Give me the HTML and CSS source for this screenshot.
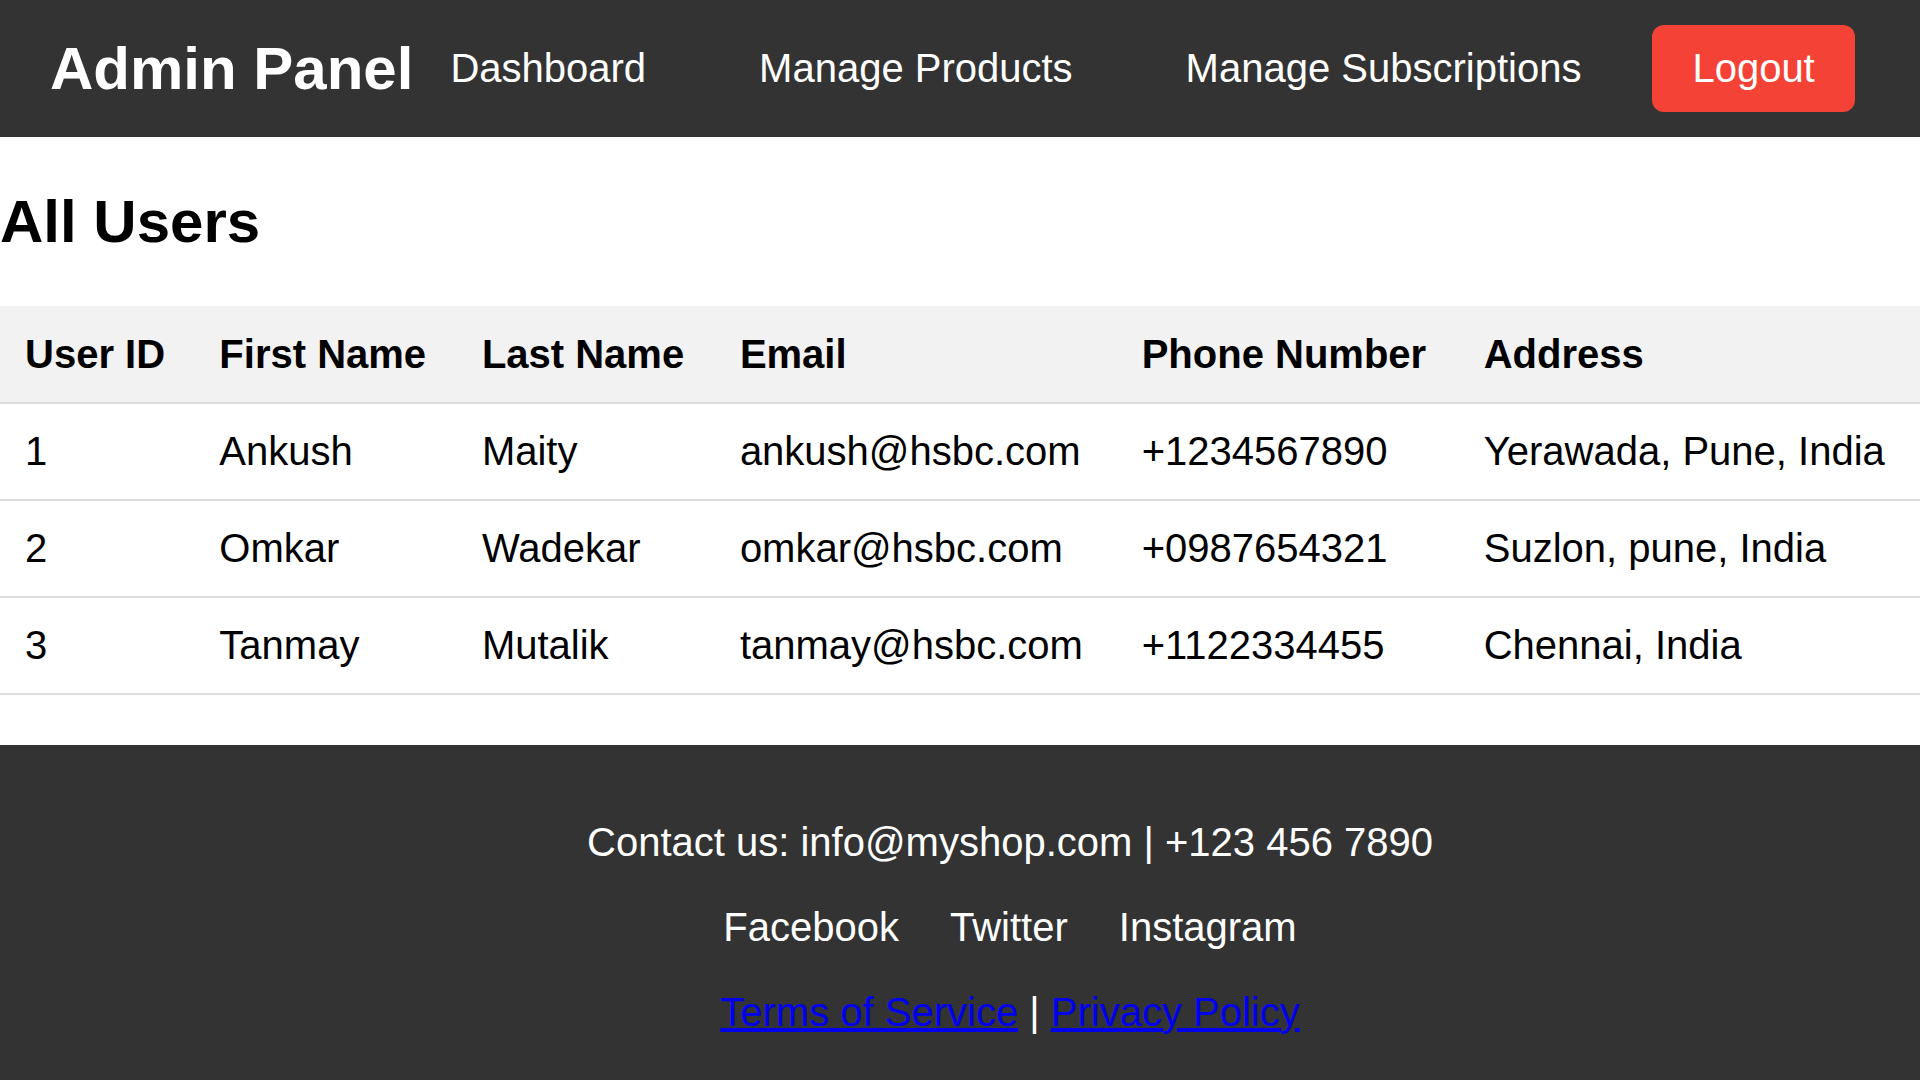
FILE: index.html
```html
<!DOCTYPE html>
<html lang="en">
<head>
<meta charset="utf-8">
<title>Admin Panel - All Users</title>
<link rel="stylesheet" href="styles.css">
</head>
<body>
<header class="topbar">
  <h1 class="brand">Admin Panel</h1>
  <nav class="nav">
    <a class="nav-link" href="#">Dashboard</a>
    <a class="nav-link" href="#">Manage Products</a>
    <a class="nav-link" href="#">Manage Subscriptions</a>
  </nav>
  <button class="logout" type="button">Logout</button>
</header>

<main class="content">
  <h2 class="page-title">All Users</h2>
  <table class="users">
    <thead>
      <tr>
        <th>User ID</th>
        <th>First Name</th>
        <th>Last Name</th>
        <th>Email</th>
        <th>Phone Number</th>
        <th>Address</th>
      </tr>
    </thead>
    <tbody>
      <tr>
        <td>1</td>
        <td>Ankush</td>
        <td>Maity</td>
        <td>ankush@hsbc.com</td>
        <td>+1234567890</td>
        <td>Yerawada, Pune, India</td>
      </tr>
      <tr>
        <td>2</td>
        <td>Omkar</td>
        <td>Wadekar</td>
        <td>omkar@hsbc.com</td>
        <td>+0987654321</td>
        <td>Suzlon, pune, India</td>
      </tr>
      <tr>
        <td>3</td>
        <td>Tanmay</td>
        <td>Mutalik</td>
        <td>tanmay@hsbc.com</td>
        <td>+1122334455</td>
        <td>Chennai, India</td>
      </tr>
    </tbody>
  </table>
</main>

<footer class="site-footer">
  <p class="footer-line">Contact us: info@myshop.com | +123 456 7890</p>
  <div class="social">
    <a class="social-link" href="#">Facebook</a>
    <a class="social-link" href="#">Twitter</a>
    <a class="social-link" href="#">Instagram</a>
  </div>
  <p class="footer-line"><a class="legal-link" href="#">Terms of Service</a> | <a class="legal-link" href="#">Privacy Policy</a></p>
</footer>
</body>
</html>
```

FILE: styles.css
```css
html {
  color-scheme: dark;
  background: #ffffff;
  overflow: scroll;
}

::-webkit-scrollbar {
  width: 17px;
  height: 17px;
  background: #424242;
}

::-webkit-scrollbar-track {
  background: #424242;
}

::-webkit-scrollbar-thumb {
  background: #686868;
  border: 2px solid #424242;
}

::-webkit-scrollbar-corner {
  background: #121212;
}

body {
  margin: 0;
  background: #ffffff;
  color: #000000;
  font-family: Arial, "Liberation Sans", sans-serif;
  font-size: 40px;
}

/* Top bar */
.topbar {
  display: flex;
  align-items: center;
  width: 100%;
  padding: 25px 50px;
  background: #333333;
  color: #ffffff;
}

.brand {
  margin: 0 37px 0 0;
  font-size: 60px;
  font-weight: bold;
  color: #ffffff;
}

.nav {
  display: flex;
  gap: 113px;
}

.nav-link {
  color: #ffffff;
  text-decoration: none;
  font-size: 40px;
}

.logout {
  margin-left: 71px;
  padding: 21px 40px;
  border: none;
  border-radius: 12px;
  background: #f44336;
  color: #ffffff;
  font-family: Arial, "Liberation Sans", sans-serif;
  font-size: 40px;
  line-height: normal;
  cursor: pointer;
}

/* Content */
.content {
  margin: 0;
}

.page-title {
  margin: 0.83em 0;
  font-size: 60px;
  font-weight: bold;
}

.users {
  width: 100%;
  border-collapse: collapse;
  margin-bottom: 50px;
}

.users th,
.users td {
  padding: 25px 25px 25px;
  text-align: left;
  border-bottom: 2px solid #dddddd;
  font-size: 40px;
  color: #000000;
}

.users th {
  padding-top: 26px;
  background: #f2f2f2;
  font-weight: bold;
}

/* Footer */
.site-footer {
  width: 100%;
  padding: 35px 50px 36px;
  background: #333333;
  color: #ffffff;
  text-align: center;
}

.footer-line {
  margin: 40px 0;
}

.social {
  display: flex;
  justify-content: center;
  gap: 51px;
  margin: 40px 0;
}

.social-link {
  color: #ffffff;
  text-decoration: none;
}

.legal-link {
  color: #0000ee;
  text-decoration: underline;
}
```
